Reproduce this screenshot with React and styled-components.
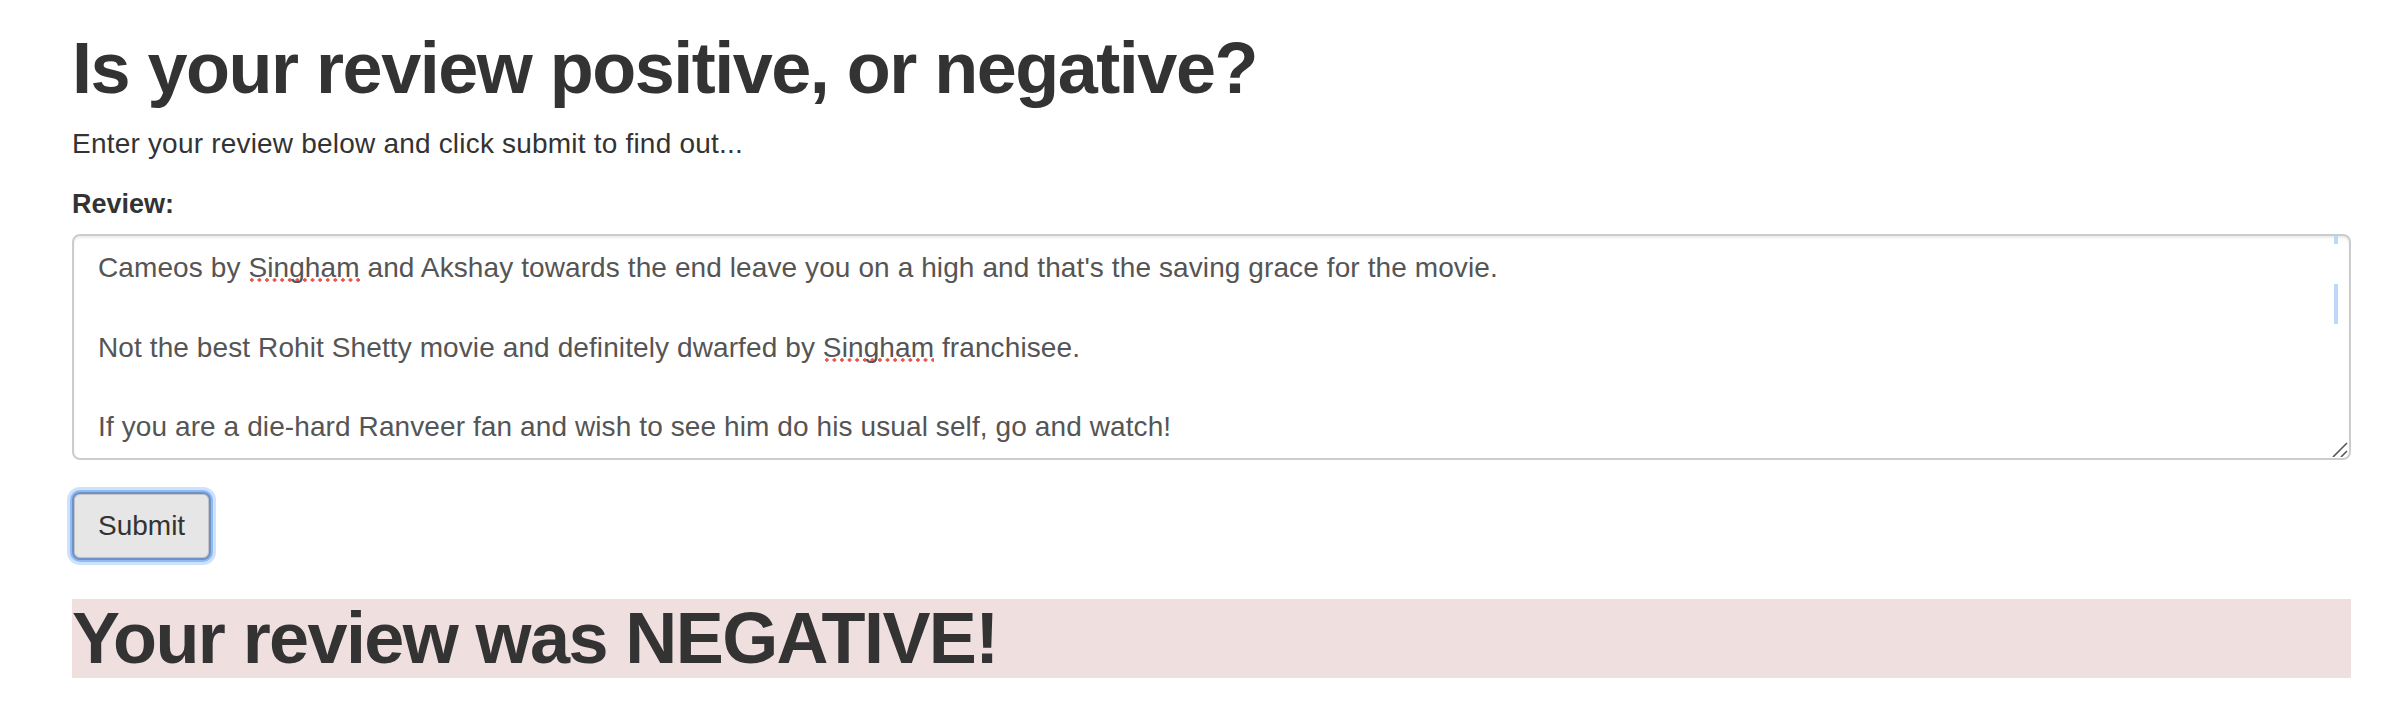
import React from 'react'
import styled, { createGlobalStyle } from 'styled-components'

const GlobalStyle = createGlobalStyle`
    body{
        margin:0;
        background:#fff;
        font-family:"Liberation Sans", Arial, sans-serif;
        color:#333;
    }
`

const Page = styled.div`
    padding:0 53px 0 72px;
`

const Title = styled.h1`
    margin:29px 0 16px;
    font-size:72px;
    line-height:79.2px;
    font-weight:700;
    letter-spacing:-1.5px;
    color:#333;
    background:${p => (p.$tone === 'danger' ? '#efdfdf' : 'transparent')};
`

const Intro = styled.p`
    margin:0 0 20px;
    font-size:28px;
    line-height:40px;
    letter-spacing:0.2px;
    color:#333;
`

const Label = styled.label`
    display:block;
    margin-bottom:10px;
    font-size:27px;
    line-height:40px;
    font-weight:700;
    color:#333;
`

const ReviewBox = styled.div`
    position:relative;
    box-sizing:border-box;
    height:226px;
    padding:12px 24px;
    border:2px solid #ccc;
    border-radius:8px;
    box-shadow:inset 0 2px 2px rgba(0,0,0,0.075);
    font-size:28px;
    line-height:39.7px;
    letter-spacing:0.1px;
    color:#555;
    overflow:hidden;
`

const Line = styled.div`
    white-space:pre;
    min-height:39.7px;
`

const Misspelled = styled.span`
    background-image:radial-gradient(circle, #e8574d 1.5px, transparent 2px);
    background-size:7.6px 4px;
    background-repeat:repeat-x;
    background-position:0 calc(100% - 1px);
`

const ScrollMark = styled.span`
    position:absolute;
    right:11px;
    width:4px;
    background:#bcd9fa;
`

const Grip = styled.svg`
    position:absolute;
    right:1px;
    bottom:1px;
`

const SubmitButton = styled.button`
    display:block;
    box-sizing:border-box;
    margin-top:32px;
    height:68px;
    padding:12px 24px;
    border:2px solid #6c92c8;
    border-radius:8px;
    background:#e6e6e6;
    box-shadow:0 0 0 2px #8fbaf3, 0 0 0 5px #cde2fc, inset 0 0 0 1px rgba(0,0,0,0.15);
    font-family:"Liberation Sans", Arial, sans-serif;
    font-size:28px;
    line-height:40px;
    color:#333;
`

const Result = styled(Title)`
    margin:39px 0 0;
    letter-spacing:-1.6px;
`

const App = () => {
    return (
        <Page>
            <GlobalStyle />
            <Title>Is your review positive, or negative?</Title>
            <Intro>Enter your review below and click submit to find out...</Intro>
            <Label>Review:</Label>
            <ReviewBox role="textbox" aria-multiline="true">
                <Line>Cameos by <Misspelled>Singham</Misspelled> and Akshay towards the end leave you on a high and that's the saving grace for the movie.</Line>
                <Line />
                <Line>Not the best Rohit Shetty movie and definitely dwarfed by <Misspelled>Singham</Misspelled> franchisee.</Line>
                <Line />
                <Line>If you are a die-hard Ranveer fan and wish to see him do his usual self, go and watch!</Line>
                <ScrollMark style={{ top: '0px', height: '8px' }} />
                <ScrollMark style={{ top: '48px', height: '40px' }} />
                <Grip width="16" height="16" viewBox="0 0 16 16">
                    <line x1="1" y1="16" x2="15" y2="2" stroke="#555" strokeWidth="1.6" />
                    <line x1="9" y1="16" x2="15" y2="10" stroke="#555" strokeWidth="1.6" />
                </Grip>
            </ReviewBox>
            <SubmitButton type="button">Submit</SubmitButton>
            <Result $tone="danger">Your review was NEGATIVE!</Result>
        </Page>
    )
}

export default App
